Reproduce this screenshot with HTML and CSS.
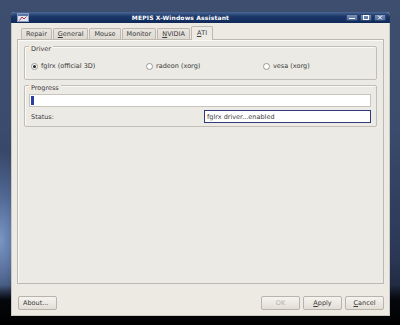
FILE: index.html
```html
<!DOCTYPE html>
<html>
<head>
<meta charset="utf-8">
<link rel="stylesheet" href="styles.css">
</head>
<body>
<div class="desk">
  <div class="window">
    <div class="titlebar">
      <div class="appicon">
        <svg width="12" height="9" viewBox="0 0 12 9"><rect x="0.5" y="0.5" width="11" height="8" fill="#dfe6f2" stroke="#8a9ab8"/><rect x="1" y="1" width="10" height="2" fill="#5a76a8"/><path d="M2.5 7.5 L5 4 L7 6 L9.5 3.5" stroke="#c0304a" stroke-width="1" fill="none"/></svg>
      </div>
      <div class="title">MEPIS X-Windows Assistant</div>
      <div class="wbtns">
        <span class="wbtn"><svg width="8" height="5" viewBox="0 0 8 5"><rect x="1" y="3" width="6" height="1" fill="#fff"/></svg></span>
        <span class="wbtn"><svg width="8" height="5" viewBox="0 0 8 5"><rect x="1.5" y="0.5" width="5" height="4" fill="none" stroke="#fff"/></svg></span>
        <span class="wbtn"><svg width="8" height="5" viewBox="0 0 8 5"><path d="M2 0.5 L6 4.5 M6 0.5 L2 4.5" stroke="#fff"/></svg></span>
      </div>
    </div>
    <div class="client">
      <div class="tabs">
        <span class="tab">Repair</span>
        <span class="tab"><u>G</u>eneral</span>
        <span class="tab">Mouse</span>
        <span class="tab">Monitor</span>
        <span class="tab"><u>N</u>VIDIA</span>
        <span class="tab active"><u>A</u>TI</span>
      </div>
      <div class="pane">
        <div class="group driver">
          <div class="glabel">Driver</div>
          <div class="radios">
            <span class="radio"><span class="dot on"></span>fglrx (official 3D)</span>
            <span class="radio"><span class="dot"></span>radeon (xorg)</span>
            <span class="radio"><span class="dot"></span>vesa (xorg)</span>
          </div>
        </div>
        <div class="group progress">
          <div class="glabel">Progress</div>
          <div class="pbar"><span class="pfill"></span></div>
          <div class="statusrow">
            <span class="slabel">Status:</span>
            <span class="sfield">fglrx driver...enabled</span>
          </div>
        </div>
      </div>
      <div class="buttons">
        <span class="btn">About...</span>
        <span class="spacer"></span>
        <span class="btn disabled">OK</span>
        <span class="btn"><u>A</u>pply</span>
        <span class="btn"><u>C</u>ancel</span>
      </div>
    </div>
  </div>
</div>
</body>
</html>
```
FILE: styles.css
```css
html, body { margin: 0; padding: 0; }
body {
  width: 400px; height: 325px; overflow: hidden;
  font-family: "DejaVu Sans", "Liberation Sans", sans-serif;
  font-size: 6.5px; color: #3a3a3a;
}
.desk {
  width: 400px; height: 325px;
  background:
    linear-gradient(to bottom, rgba(0,0,0,0) 0, rgba(0,0,0,0) 285px, #05070c 300px, #000 325px),
    radial-gradient(ellipse 40px 90px at 0 240px, #7b97c6 0, rgba(100,130,180,0.6) 50%, rgba(0,0,0,0) 100%),
    linear-gradient(to bottom, #3e4e6e 0, #3b4b6d 40%, #2a3654 80%, #121826 100%);
  padding: 12px 0 0 11px; box-sizing: border-box;
}
.window {
  width: 379px; height: 304px;
  display: flex; flex-direction: column;
  border-radius: 4px 4px 0 0;
  background: #edeae4;
  border: 1px solid #c9c7c2; border-top: none;
  box-sizing: border-box;
}
.titlebar {
  height: 11px; display: flex; align-items: center;
  background: linear-gradient(to bottom, #4a6796 0, #1c3868 40%, #0f2a59 100%);
  border-radius: 4px 4px 0 0;
  padding: 0 4px; margin: 0 -1px;
  position: relative;
}
.appicon { width: 12px; height: 9px; margin-left: 2px; }
.appicon svg { display: block; }
.title {
  flex: 1; text-align: center; color: #fff; font-weight: bold;
  font-size: 6px; letter-spacing: 0.15px; padding-right: 14px;
}
.wbtns { display: flex; gap: 2px; }
.wbtn {
  width: 12px; height: 7px; display: flex; align-items: center; justify-content: center;
  background: linear-gradient(to bottom, #7d93b8, #4f6a97);
  border: 1px solid #2a4572; border-radius: 1px; box-sizing: border-box;
}
.wbtn svg { display: block; }
.client {
  flex: 1; display: flex; flex-direction: column;
  padding: 4px 5px 5px 5px;
}
.tabs { display: flex; align-items: flex-end; height: 12px; padding-left: 4px; gap: 1px; }
.tab {
  height: 11px; box-sizing: border-box;
  border: 1px solid #bdb9b0; border-bottom: none;
  border-radius: 2px 2px 0 0;
  background: linear-gradient(to bottom, #e9e6df, #dedad2);
  padding: 0 4px; display: flex; align-items: center;
}
.tab.active {
  height: 14px; background: #edeae4; margin-bottom: -1px; position: relative;
  padding: 0 5px; align-items: flex-start; padding-top: 2px;
}
.tab u, .btn u { text-decoration: underline; }
.pane {
  height: 245px; box-sizing: border-box;
  border: 1px solid #bdb9b0; background: #eceae4;
  padding: 6px 6px 0 6px;
  display: flex; flex-direction: column; gap: 5px;
  box-shadow: inset 1px 1px 0 #fbfaf7;
}
.group {
  border: 1px solid #c2beb5; border-radius: 2px; position: relative;
  box-shadow: inset 1px 1px 0 #fbfaf7;
}
.glabel {
  position: absolute; top: -1px; left: 4px; padding: 0 2px;
  background: #edeae4; line-height: 7px; font-size: 6.5px;
}
.driver { height: 32px; display: flex; align-items: center; }
.radios { display: flex; width: 100%; padding: 6px 0 0 6px; }
.radio { display: flex; align-items: center; gap: 3px; }
.radio:nth-child(1) { width: 115px; }
.radio:nth-child(2) { width: 117px; }
.dot {
  width: 5px; height: 5px; border-radius: 50%; border: 1px solid #999; background: #fff;
  position: relative;
}
.dot.on::after {
  content: ""; position: absolute; left: 1px; top: 1px; width: 3px; height: 3px; border-radius: 50%; background: #222;
}
.progress { height: 42px; padding: 8px 5px 0 4px; box-sizing: border-box; }
.pbar {
  height: 13px; background: #fff; border: 1px solid #c8c4bb; box-sizing: border-box;
  padding: 1px; display: flex;
}
.pfill { width: 3px; background: #2b3fa0; }
.statusrow { display: flex; align-items: center; margin-top: 3px; }
.slabel { width: 173px; padding-left: 2px; }
.sfield {
  flex: 1; height: 13px; box-sizing: border-box;
  border: 1px solid #333a7a; background: #fff;
  display: flex; align-items: center; padding-left: 2px;
}
.buttons { display: flex; align-items: center; margin-top: 12px; gap: 3px; padding-left: 1px; }
.spacer { flex: 1; }
.btn {
  width: 39px; height: 14px; box-sizing: border-box;
  border: 1px solid #b8b4ab; border-radius: 2px;
  background: linear-gradient(to bottom, #f5f3ef, #e2ded6);
  display: flex; align-items: center; justify-content: center;
}
.btn:first-child { justify-content: flex-start; padding-left: 4px; }
.btn.disabled { color: #b5b1a9; }
```
